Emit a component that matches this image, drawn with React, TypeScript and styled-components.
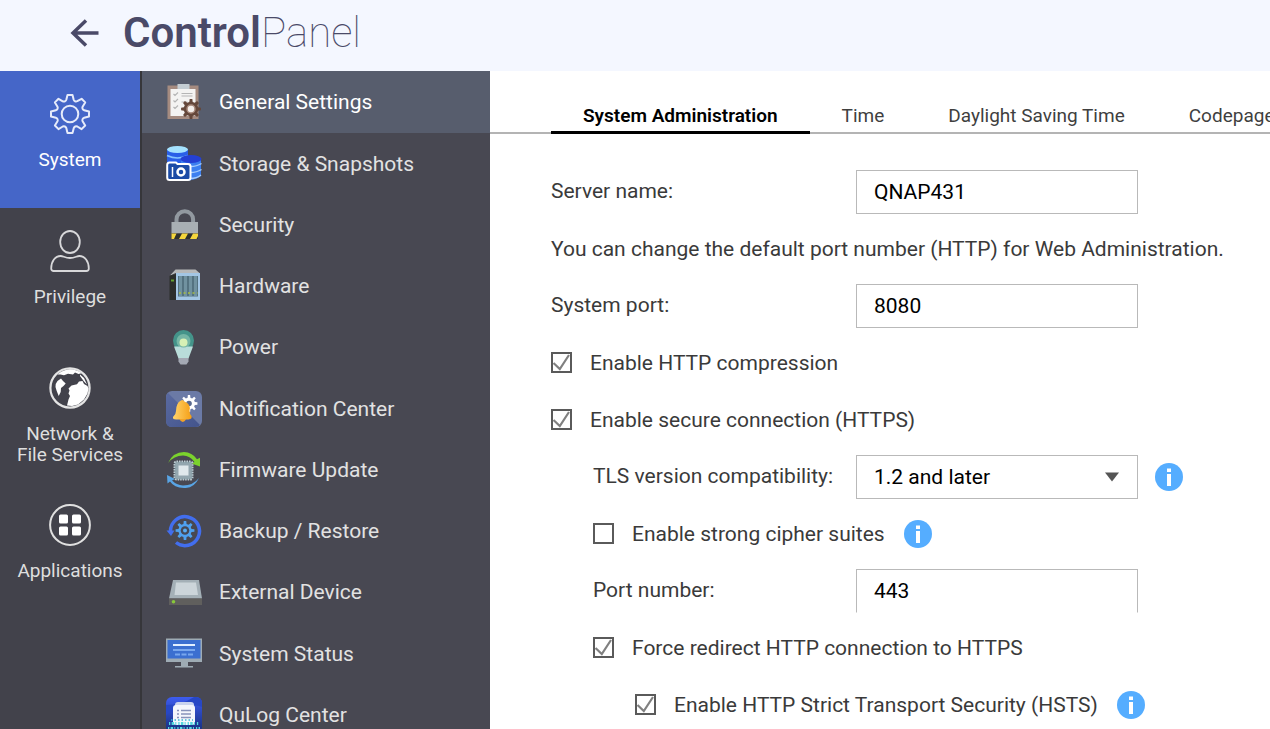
import React, { useState } from "react";
import styled, { createGlobalStyle } from "styled-components";

const GlobalStyle = createGlobalStyle`
  *, *::before, *::after { box-sizing: border-box; }
  body {
    margin: 0;
    background: #ffffff;
    font-family: Roboto, "Liberation Sans", sans-serif;
    font-size: 21px;
    line-height: 24px;
    color: #3a3a3a;
  }
  button, input, select { font: inherit; }
`;

const Shell = styled.div`
  display: flex;
  flex-direction: column;
  height: 100vh;
  overflow: hidden;
`;

const Header = styled.header`
  flex: none;
  display: flex;
  align-items: center;
  gap: 24px;
  height: 71px;
  padding: 0 0 6px 69px;
  background: #f4f7ff;
  color: #4a4a68;
`;

const BackButton = styled.button`
  display: flex;
  padding: 0;
  border: 0;
  background: none;
  color: inherit;
  cursor: pointer;
`;

const Title = styled.h1`
  margin: 0;
  font-size: 42px;
  line-height: 48px;
  font-weight: 100;
`;

const TitleStrong = styled.span`
  font-weight: 600;
`;

const Body = styled.div`
  flex: 1;
  display: flex;
  min-height: 0;
`;

const CategoryNav = styled.nav`
  flex: none;
  width: 142px;
  background: #42424b;
  border-right: 2px solid #36363a;
`;

const CategoryButton = styled.button<{ $active?: boolean }>`
  display: flex;
  flex-direction: column;
  align-items: center;
  gap: 14px;
  width: 100%;
  height: 137px;
  padding: 22px 0 0;
  border: 0;
  font-size: 19px;
  line-height: 21px;
  color: ${(p) => (p.$active ? "#ffffff" : "#dedede")};
  background: ${(p) => (p.$active ? "#4566c8" : "transparent")};
  cursor: pointer;
  white-space: pre-line;
`;

const Menu = styled.ul`
  flex: none;
  width: 348px;
  margin: 0;
  padding: 0;
  list-style: none;
  background: #484852;
  overflow: hidden;
`;

const MenuItem = styled.li`
  height: 61px;
  &:nth-child(4n + 1) {
    height: 62px;
  }
`;

const MenuLink = styled.a<{ $active?: boolean }>`
  display: flex;
  align-items: center;
  gap: 17px;
  height: 100%;
  padding-left: 24px;
  color: ${(p) => (p.$active ? "#ffffff" : "#e2e2e2")};
  background: ${(p) => (p.$active ? "#575d6d" : "transparent")};
  text-decoration: none;
`;

const Content = styled.main`
  flex: 1;
  min-width: 0;
  padding-top: 26px;
  overflow: hidden;
`;

const Tabs = styled.div`
  display: flex;
  height: 37px;
  padding-left: 61px;
  box-shadow: inset 0 -2px 0 #b4b4b4;
`;

const Tab = styled.button<{ $active?: boolean }>`
  flex: none;
  padding: 3px 32px 0;
  border: 0;
  border-bottom: 3px solid ${(p) => (p.$active ? "#000000" : "transparent")};
  background: none;
  font-size: 19px;
  line-height: 31px;
  font-weight: ${(p) => (p.$active ? 600 : 400)};
  color: ${(p) => (p.$active ? "#000000" : "#3f3f3f")};
  cursor: pointer;
`;

const Form = styled.form`
  padding: 29px 0 0 61px;
`;

const Row = styled.div<{ $level?: number }>`
  display: flex;
  align-items: center;
  height: 57px;
  padding-left: ${(p) => (p.$level ?? 0) * 42}px;
  white-space: nowrap;
`;

const FieldLabel = styled.label<{ $nested?: boolean }>`
  flex: none;
  width: ${(p) => (p.$nested ? 263 : 305)}px;
  padding-bottom: 2px;
`;

const TextField = styled.input<{ $cut?: boolean }>`
  width: 282px;
  height: 44px;
  padding: 0 17px;
  border: 1px solid #b9b9b9;
  border-bottom-color: ${(p) => (p.$cut ? "transparent" : "#b9b9b9")};
  background: #ffffff;
  color: #000000;
  outline: none;
`;

const SelectBox = styled.div`
  display: grid;
  grid-template-columns: 282px;
  align-items: center;
  margin-right: 17px;
  > * {
    grid-area: 1 / 1;
  }
  > svg {
    justify-self: end;
    margin-right: 18px;
    pointer-events: none;
  }
`;

const Select = styled.select`
  appearance: none;
  height: 44px;
  padding: 0 17px;
  border: 1px solid #b9b9b9;
  border-radius: 0;
  background: #ffffff;
  color: #000000;
  outline: none;
`;

const CheckLabel = styled.label`
  display: flex;
  align-items: center;
  gap: 18px;
  margin-right: 19px;
`;

const CheckFrame = styled.span`
  display: grid;
  > * {
    grid-area: 1 / 1;
  }
  > svg {
    pointer-events: none;
    visibility: hidden;
  }
  > input:checked + svg {
    visibility: visible;
  }
`;

const CheckInput = styled.input`
  appearance: none;
  width: 21px;
  height: 21px;
  margin: 0;
  border: 2px solid #5a5a5a;
  background: #ffffff;
`;

const InfoButton = styled.button`
  display: flex;
  padding: 0;
  border: 0;
  background: none;
  cursor: pointer;
`;

function gear(cx: number, cy: number, outer: number, inner: number, teeth = 8) {
  const step = (Math.PI * 2) / teeth;
  const pts: string[] = [];
  for (let i = 0; i < teeth; i++) {
    const a = i * step - Math.PI / 2;
    const corners: [number, number][] = [
      [inner, -0.3],
      [outer, -0.17],
      [outer, 0.17],
      [inner, 0.3],
    ];
    corners.forEach(([r, o]) => {
      const t = a + o * step;
      pts.push(`${(cx + r * Math.cos(t)).toFixed(2)} ${(cy + r * Math.sin(t)).toFixed(2)}`);
    });
  }
  return `M${pts.join("L")}Z`;
}

const navSvg = { width: 42, height: 42, viewBox: "0 0 42 42", fill: "none", "aria-hidden": true } as const;
const menuSvg = { width: 36, height: 36, viewBox: "0 0 36 36", fill: "none", "aria-hidden": true } as const;

const SystemIcon = () => (
  <svg {...navSvg} stroke="#e6ebfa" strokeWidth="2" strokeLinejoin="round">
    <path d="M18.5 2h5l1.200 4.800q.3 1 1.300 1.400 1.200.5 2.200 0L32.600 5.800l3.600 3.600-2.600 4.300q-.5 1 0 2.100.5 1.100 1.600 1.400L40 18.500v5l-4.800 1.200q-1.100.3-1.600 1.400-.5 1.100 0 2.100l2.600 4.300-3.600 3.600-4.300-2.600q-1-.5-2.100 0-1.100.5-1.400 1.600L23.500 40h-5l-1.200-4.900q-.3-1.100-1.400-1.600-1.100-.5-2.100 0L9.500 36.100l-3.600-3.600 2.600-4.300q.5-1 0-2.100-.5-1.100-1.600-1.400L2 23.500v-5l4.900-1.300q1.100-.3 1.600-1.400.5-1.100 0-2.100L5.900 9.400l3.600-3.600 4.300 2.500q1 .5 2.100 0 1.100-.5 1.400-1.500Z" />
    <circle cx="21" cy="21" r="8.300" />
  </svg>
);

const PrivilegeIcon = () => (
  <svg {...navSvg} stroke="#d8d8da" strokeWidth="1.800">
    <ellipse cx="21" cy="12" rx="9.800" ry="11" />
    <path d="M2.200 38.500c0-7.500 4-12.500 9.500-12.500 2.500 0 4.500 2 9.300 2s6.800-2 9.300-2c5.500 0 9.500 5 9.500 12.500q0 2.500-2.500 2.500H4.700q-2.500 0-2.500-2.500Z" />
  </svg>
);

const NetworkIcon = () => (
  <svg {...navSvg}>
    <circle cx="21" cy="21" r="19.600" stroke="#e4e4e4" strokeWidth="2.200" />
    <path fill="#fff" d="M8.500 7.500Q14 2.500 21 2.200q7 .3 11.500 4l-3 .8-3.500-1.500-2 2-5-.8-4 1.500-3.500-.8ZM12 11.500l2 2.500 2.700 2.500-2.200 2.500-2.500 2-.3 4-2 4-2-5L6.500 20q0-4 2-6ZM31 7.500l4 3.500 3 6.500-3-3-4-5.500ZM22.500 18.500l5.500-1.200 2-2.800 3.500-.5 1.500 3 3.500 2 1 2.500-1 5-3.500 6-6 5-6 1.500-5-.5 1.500-6 1.500-3.500-1.500-2.500 1-3-1-2Z" />
  </svg>
);

const ApplicationsIcon = () => (
  <svg {...navSvg}>
    <circle cx="21" cy="21" r="19.900" stroke="#e0e0e0" strokeWidth="2" />
    <path fill="#fff" d="M11.500 10.500h6q1.500 0 1.500 1.500v6q0 1.500-1.500 1.500h-6q-1.500 0-1.500-1.500v-6q0-1.500 1.500-1.500ZM24.500 10.500h6q1.500 0 1.500 1.500v6q0 1.500-1.500 1.500h-6q-1.500 0-1.500-1.500v-6q0-1.500 1.500-1.500ZM11.500 22.500h6q1.500 0 1.500 1.500v6q0 1.500-1.500 1.500h-6q-1.500 0-1.500-1.500v-6q0-1.500 1.500-1.500ZM24.500 22.500h6q1.500 0 1.500 1.500v6q0 1.500-1.500 1.500h-6q-1.500 0-1.500-1.500v-6q0-1.500 1.500-1.500Z" />
  </svg>
);

const GeneralIcon = () => (
  <svg {...menuSvg}>
    <path fill="#a58b80" d="M1.500 1.500h31v33.500h-31z" />
    <path fill="#f4f3f2" d="M4.500 5h25v27h-25z" />
    <path fill="#c4cdd3" d="M11.500 0h12v5h-12z" />
    <path stroke="#b5b5b5" strokeWidth="1.200" d="m7.500 10 1.500 1.500 3-3M7.500 16.500 9 18l3-3M7.500 23 9 24.500l3-3M15.500 9.500h11M15.500 12h11M15.500 18h6" />
    <path fill="#65473a" d={gear(25, 25, 10, 7.3)} />
    <circle cx="25" cy="25" r="4" fill="#f4eeea" stroke="#a7897b" strokeWidth="1.500" />
  </svg>
);

const StorageIcon = () => (
  <svg {...menuSvg}>
    <path fill="#2a5fe8" d="M1 3v14h21V3z" />
    <ellipse cx="11.500" cy="3.500" rx="10.500" ry="3.500" fill="#a5e2ff" />
    <path stroke="#86c4ff" strokeWidth="1.500" d="M1 9.500q10.500 5 21 0" />
    <path fill="#3c7ff0" d="M15 13h20v17q-6 5-20 5Z" />
    <ellipse cx="25" cy="13" rx="10.500" ry="4" fill="#2440d4" />
    <path stroke="#a6cdfc" strokeWidth="1.500" d="M24 20.500q7 0 11.500-3M24 26.500q7 0 11.500-3M24 32.500q7 0 11-3.500" />
    <path fill="#1c4ba6" stroke="#fff" strokeWidth="2" strokeLinejoin="round" d="M3.500 16.500H10l1.500 1.500H22q2.500 0 2.500 2.500v11q0 2.500-2.500 2.500H3.500Q1.200 34 1.200 31.500V19q0-2.500 2.300-2.500Z" />
    <path stroke="#fff" strokeWidth="1.500" d="M6.500 21v10" />
    <circle cx="15" cy="26" r="3.500" stroke="#fff" strokeWidth="2.500" />
  </svg>
);

const SecurityIcon = () => (
  <svg {...menuSvg}>
    <path stroke="#9299a0" strokeWidth="4" d="M10.500 20v-7.500a8.300 8.300 0 0 1 16.600 0V20" />
    <path fill="#a9afb4" d="M5.500 15h26.500v11.500H5.500z" />
    <path fill="#2f302d" d="M5.500 26.500h26.500V32H5.500z" />
    <path fill="#f5d63c" d="M5.500 26.500h5L8 32H5.500zM16 26.500h6L19 32h-6zM27 26.500h5V29l-1.500 3H24z" />
  </svg>
);

const HardwareIcon = () => (
  <svg {...menuSvg}>
    <path fill="#b7b9ba" d="M9.500 1.500h20l4 3.500h-24L3.500 8Z" />
    <path fill="#2c2e2c" d="M3.500 7.500 10 6v26H3.500z" />
    <path fill="#a3c6e4" d="M10 5h24v27H10z" />
    <path fill="#547280" d="M12 8h20v20.500H12z" />
    <path stroke="#7192a0" strokeWidth="3" d="M14.500 8v20M19.500 8v20M24.500 8v20M29.500 8v20" />
    <path stroke="#a9bd42" strokeWidth="1.500" strokeDasharray="2 2.500" d="M13 25h18.500" />
    <path fill="#65a331" d="M5 11.500h3v2H5z" />
  </svg>
);

const PowerIcon = () => (
  <svg {...menuSvg}>
    <path fill="#44948a" d="M17.500 1A10.500 10.500 0 0 1 28 11.500q0 4-3 8H10q-3-4-3-8A10.500 10.500 0 0 1 17.500 1Z" />
    <circle cx="17.500" cy="12" r="7" fill="#75b6a5" />
    <circle cx="17.500" cy="13.500" r="4" fill="#d7f0b5" />
    <path fill="#b9ddda" d="M8 17.500h5.500q4 2 8 0H27l-4.500 12h-10z" />
    <path fill="#a4a9b4" d="M12.500 29h10v3.500l-2 3h-6l-2-3z" />
  </svg>
);

const NotificationIcon = () => (
  <svg {...menuSvg}>
    <defs>
      <linearGradient id="bell" x1="0" y1="0" x2="1" y2="0">
        <stop stopColor="#ffd36c" />
        <stop offset="1" stopColor="#f59e14" />
      </linearGradient>
      <linearGradient id="noteTile" x1="0" y1="0" x2="1" y2="1">
        <stop stopColor="#5a6aa0" />
        <stop offset="1" stopColor="#43548c" />
      </linearGradient>
    </defs>
    <rect width="36" height="36" rx="6" fill="#6b7aa6" />
    <path fill="url(#noteTile)" d="M2 2 34 34q-1.500 2-4 2H6q-6 0-6-6V6Q0 3.500 2 2Z" />
    <path fill="#fff" d={gear(23, 12.5, 8.5, 6)} />
    <circle cx="23" cy="12.500" r="2.800" fill="#59698f" />
    <path fill="url(#bell)" d="M15 9.500q2-1.500 3.500 1 6.500 2.500 5 9 0 4 2 5.500 1 3-3 3.500L10 28.500q-3.500 0-3-2.500 3-2.500 3-6 0-8 5-10.500Z" />
    <path fill="#f3a227" d="M13.500 28h6.500q-1 3-3.200 3t-3.300-3Z" />
  </svg>
);

const FirmwareIcon = () => (
  <svg {...menuSvg}>
    <path fill="#7bd22d" d="M2 11Q7 0 18 0q8 .2 13 7.200l3-1.500V14.500l-8.500-3 3-1.500Q24 3.500 17 3.500 8 3.500 2 11Z" />
    <path fill="#59a5e5" d="M33 26Q28 36.500 18 36 8 35.500 4 29.500L1.500 31.500 1 23l8 4-3 1.500q4.500 4.500 11 5Q27 33.500 33 26Z" />
    <rect x="8.500" y="9.500" width="18" height="18" rx="2" fill="#758c96" stroke="#bccad1" strokeWidth="2" strokeDasharray="1.500 1" />
    <path fill="#93a6af" d="M9.500 10.500h16v16h-16z" />
    <path fill="#e0e8ec" d="M12.500 13.500h10v10h-10z" />
  </svg>
);

const BackupIcon = () => (
  <svg {...menuSvg}>
    <path stroke="#426eee" strokeWidth="3.500" d="M4.500 18.500A14.500 14.500 0 1 1 10 29.500" />
    <path fill="#426eee" d="M.5 17.500h8L5 23Z" />
    <path fill="#4fa1ef" d={gear(19, 17.5, 9.5, 6.7)} />
    <circle cx="19" cy="17.500" r="4.300" fill="#464854" />
    <circle cx="19" cy="17.500" r="2" fill="#59acf2" />
  </svg>
);

const ExternalIcon = () => (
  <svg {...menuSvg}>
    <path fill="#a4b0b7" d="M7 6h26l3 18.500H3Z" />
    <path fill="#ccd5da" d="M10 8.500h20l2 12.500H8.500Z" />
    <path fill="#605f5d" d="M3 24.500h33V31H3z" />
    <circle cx="7.500" cy="27.800" r="1.800" fill="#87c83a" />
  </svg>
);

const StatusIcon = () => (
  <svg {...menuSvg}>
    <path fill="#9eabb4" d="M0 2.500h36V26H0zM15 26h7v4h5v1.500H9V30h6z" />
    <path fill="#3b6fd0" d="M1.500 4h33v18.500h-33z" />
    <path stroke="#e2efff" strokeWidth="2" d="M7 9h22" />
    <path stroke="#78a7ee" strokeWidth="2" d="M7 14h22M9 18.500h5M15.500 18.500h5M22 18.500h5" />
  </svg>
);

const QuLogIcon = () => (
  <svg {...menuSvg}>
    <defs>
      <linearGradient id="logTile" x1="0" y1="0" x2="0" y2="1">
        <stop stopColor="#3d5cf0" />
        <stop offset="1" stopColor="#142d78" />
      </linearGradient>
    </defs>
    <rect width="36" height="36" rx="6" fill="url(#logTile)" />
    <path fill="#2747c5" d="M28 0h2q6 0 6 6v4Q24 4 0 18V8Q16 8 28 0Z" />
    <rect x="9" y="5" width="19" height="22" rx="3" fill="#c9d3ee" />
    <rect x="7" y="8" width="22" height="20" rx="3" fill="#f4f6fc" />
    <path stroke="#8793bb" strokeWidth="1.500" d="M11 13.500h2M15 13.500h10M11 17h2M15 17h10M11 20.500h2M15 20.500h10" />
    <path stroke="#53d8df" strokeWidth="3" strokeDasharray="1.300 1.300 2.500 1.200 1 2" d="M3 26.500h30M2 31.500h32" />
    <path stroke="#37b9d5" strokeWidth="1.500" strokeDasharray="1.500 2" d="M5 23h22" />
  </svg>
);

const InfoIcon = () => (
  <svg width="28" height="28" viewBox="0 0 28 28" aria-hidden="true">
    <circle cx="14" cy="14" r="14" fill="#55adff" />
    <path fill="#fff" d="M12 5.500h4v3.500h-4zM12 11h4v12h-4z" />
  </svg>
);

const Info = ({ about }: { about: string }) => (
  <InfoButton type="button" aria-label={about}>
    <InfoIcon />
  </InfoButton>
);

const Check = ({ label, on }: { label: string; on?: boolean }) => (
  <CheckLabel>
    <CheckFrame>
      <CheckInput type="checkbox" defaultChecked={on} />
      <svg width="21" height="21" viewBox="0 0 21 21" fill="none" aria-hidden="true">
        <path d="m2.500 11 6.300 6L18 3" stroke="#808080" strokeWidth="2.200" />
      </svg>
    </CheckFrame>
    {label}
  </CheckLabel>
);

const categories = [
  { name: "System", Icon: SystemIcon },
  { name: "Privilege", Icon: PrivilegeIcon },
  { name: "Network &\nFile Services", Icon: NetworkIcon },
  { name: "Applications", Icon: ApplicationsIcon },
];

const menu = [
  { name: "General Settings", Icon: GeneralIcon },
  { name: "Storage & Snapshots", Icon: StorageIcon },
  { name: "Security", Icon: SecurityIcon },
  { name: "Hardware", Icon: HardwareIcon },
  { name: "Power", Icon: PowerIcon },
  { name: "Notification Center", Icon: NotificationIcon },
  { name: "Firmware Update", Icon: FirmwareIcon },
  { name: "Backup / Restore", Icon: BackupIcon },
  { name: "External Device", Icon: ExternalIcon },
  { name: "System Status", Icon: StatusIcon },
  { name: "QuLog Center", Icon: QuLogIcon },
];

const tabs = ["System Administration", "Time", "Daylight Saving Time", "Codepage"];

export default function App() {
  const [category, setCategory] = useState(0);
  const [page, setPage] = useState(0);
  const [tab, setTab] = useState(0);

  return (
    <Shell>
      <GlobalStyle />
      <Header>
        <BackButton type="button" aria-label="Back">
          <svg width="30" height="30" viewBox="0 0 30 30" fill="none" stroke="currentColor" strokeWidth="3.500" aria-hidden="true">
            <path d="M17 2.500 4 15 17 27.500M4 15H29.500" />
          </svg>
        </BackButton>
        <Title>
          <TitleStrong>Control</TitleStrong>Panel
        </Title>
      </Header>
      <Body>
        <CategoryNav aria-label="Categories">
          {categories.map(({ name, Icon }, i) => (
            <CategoryButton key={name} type="button" $active={i === category} onClick={() => setCategory(i)}>
              <Icon />
              {name}
            </CategoryButton>
          ))}
        </CategoryNav>
        <Menu>
          {menu.map(({ name, Icon }, i) => (
            <MenuItem key={name}>
              <MenuLink href="#" $active={i === page} onClick={() => setPage(i)}>
                <Icon />
                {name}
              </MenuLink>
            </MenuItem>
          ))}
        </Menu>
        <Content>
          <Tabs role="tablist">
            {tabs.map((name, i) => (
              <Tab key={name} type="button" role="tab" aria-selected={i === tab} $active={i === tab} onClick={() => setTab(i)}>
                {name}
              </Tab>
            ))}
          </Tabs>
          <Form onSubmit={(e) => e.preventDefault()}>
            <Row>
              <FieldLabel htmlFor="server">Server name:</FieldLabel>
              <TextField id="server" defaultValue="QNAP431" />
            </Row>
            <Row>You can change the default port number (HTTP) for Web Administration.</Row>
            <Row>
              <FieldLabel htmlFor="port">System port:</FieldLabel>
              <TextField id="port" defaultValue="8080" />
            </Row>
            <Row>
              <Check label="Enable HTTP compression" on />
            </Row>
            <Row>
              <Check label="Enable secure connection (HTTPS)" on />
            </Row>
            <Row $level={1}>
              <FieldLabel htmlFor="tls" $nested>
                TLS version compatibility:
              </FieldLabel>
              <SelectBox>
                <Select id="tls">
                  <option>1.2 and later</option>
                </Select>
                <svg width="16" height="10" viewBox="0 0 16 10" aria-hidden="true">
                  <path fill="#555" d="M1 .5h14L8 9.500Z" />
                </svg>
              </SelectBox>
              <Info about="About TLS versions" />
            </Row>
            <Row $level={1}>
              <Check label="Enable strong cipher suites" />
              <Info about="About cipher suites" />
            </Row>
            <Row $level={1}>
              <FieldLabel htmlFor="https" $nested>
                Port number:
              </FieldLabel>
              <TextField id="https" defaultValue="443" $cut />
            </Row>
            <Row $level={1}>
              <Check label="Force redirect HTTP connection to HTTPS" on />
            </Row>
            <Row $level={2}>
              <Check label="Enable HTTP Strict Transport Security (HSTS)" on />
              <Info about="About HSTS" />
            </Row>
          </Form>
        </Content>
      </Body>
    </Shell>
  );
}
